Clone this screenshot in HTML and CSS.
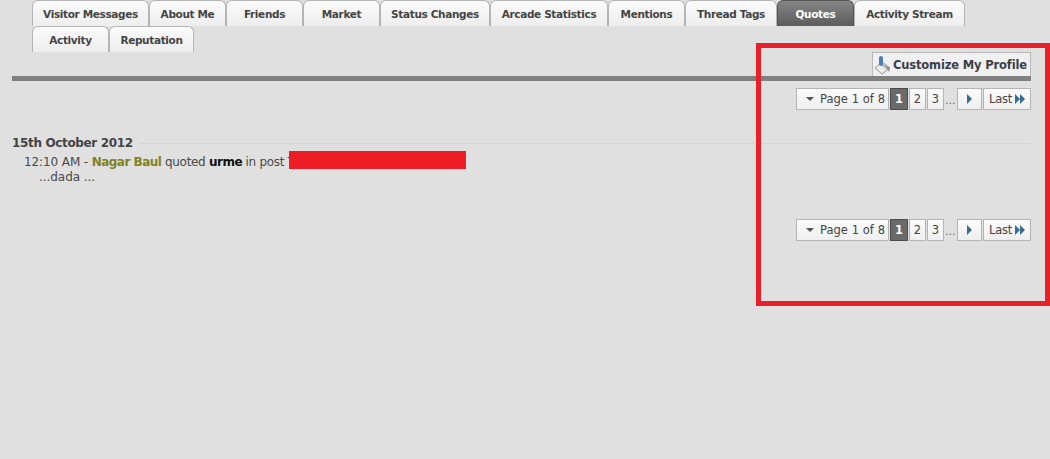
FILE: index.html
```html
<!DOCTYPE html>
<html lang="en">
<head>
    <meta charset="UTF-8">
    <title>Quotes</title>
    <link rel="stylesheet" href="styles.css">
</head>
<body>
    <ul class="tabs">
        <li class="tab tab-visitor">Visitor Messages</li>
        <li class="tab">About Me</li>
        <li class="tab">Friends</li>
        <li class="tab">Market</li>
        <li class="tab tab-status">Status Changes</li>
        <li class="tab tab-arcade">Arcade Statistics</li>
        <li class="tab">Mentions</li>
        <li class="tab tab-tags">Thread Tags</li>
        <li class="tab selected">Quotes</li>
        <li class="tab tab-stream">Activity Stream</li>
        <li class="tab">Activity</li>
        <li class="tab tab-rep">Reputation</li>
    </ul>

    <div class="profile-bar">
        <a class="customize">
            <svg class="brush" width="20" height="22" viewBox="0 0 20 22">
                <path d="M2 14 L9 8 L17 14 L9 20 Z" fill="#ececec" stroke="#9a9a9a"/>
                <path d="M10 9 L17 14 L14 16 L8 11 Z" fill="#bdbdbd"/>
                <rect x="6" y="2" width="4" height="10" rx="2" fill="#4d7fb5"/>
                <path d="M12 11 L17 14 L16 18 Z" fill="#8f8f8f"/>
            </svg>
            Customize My Profile
        </a>
    </div>

    <div class="pagination">
        <span class="page-box page-label"><i class="arrow-down"></i>Page 1 of 8</span>
        <span class="page-box page-num current">1</span>
        <span class="page-box page-num">2</span>
        <span class="page-box page-num">3</span>
        <span class="dots">...</span>
        <span class="page-box page-next"><i class="arrow-right"></i></span>
        <span class="page-box page-last">Last<i class="arrow-right small"></i><i class="arrow-right small"></i></span>
    </div>

    <div class="activity">
        <h3 class="date"><span>15th October 2012</span></h3>
        <div class="entry">
            <span class="time">12:10 AM -</span> <a class="user">Nagar Baul</a> quoted <b class="quoted">urme</b> in post T<span class="redacted"></span>
        </div>
        <div class="excerpt">...dada ...</div>
    </div>

    <div class="pagination bottom">
        <span class="page-box page-label"><i class="arrow-down"></i>Page 1 of 8</span>
        <span class="page-box page-num current">1</span>
        <span class="page-box page-num">2</span>
        <span class="page-box page-num">3</span>
        <span class="dots">...</span>
        <span class="page-box page-next"><i class="arrow-right"></i></span>
        <span class="page-box page-last">Last<i class="arrow-right small"></i><i class="arrow-right small"></i></span>
    </div>

    <div class="highlight"></div>
</body>
</html>
```

FILE: styles.css
```css
body {
    margin: 0;
    height: 459px;
    overflow: hidden;
    background: #e0e0e0;
    color: #3e3e3e;
    font-family: "DejaVu Sans", sans-serif;
    font-size: 12px;
    position: relative;
}

.tabs {
    display: flex;
    flex-wrap: wrap;
    width: 1000px;
    height: 52px;
    margin: 0 0 0 32px;
    padding: 0;
    list-style: none;
}

.tab {
    box-sizing: border-box;
    width: 77px;
    height: 26px;
    line-height: 27px;
    text-align: center;
    font-size: 10.5px;
    font-weight: bold;
    letter-spacing: -0.35px;
    color: #444;
    background: linear-gradient(#fbfbfb, #eeeeee);
    border: 1px solid #b5b5b5;
    border-bottom: none;
    border-radius: 6px 6px 0 0;
    white-space: nowrap;
}

.tab-visitor { width: 117px; }
.tab-status { width: 110px; }
.tab-arcade { width: 118px; }
.tab-tags { width: 92px; }
.tab-stream { width: 111px; }
.tab-rep { width: 85px; }

.tab.selected {
    color: #fff;
    background: linear-gradient(#858585, #5c5c5c);
    border-color: #555;
}

.profile-bar {
    display: flex;
    justify-content: flex-end;
    width: 1019px;
    height: 24px;
    margin-left: 12px;
    border-bottom: 5px solid #808080;
}

.customize {
    box-sizing: border-box;
    display: flex;
    align-items: center;
    width: 159px;
    height: 24px;
    font-size: 11.5px;
    font-weight: bold;
    letter-spacing: -0.15px;
    color: #3a3f45;
    background: #f0f0f0;
    border: 1px solid #b8b8b8;
    border-bottom: none;
    white-space: nowrap;
}

.brush {
    flex: none;
}

.pagination {
    display: flex;
    justify-content: flex-end;
    gap: 1px;
    width: 1031px;
    height: 22px;
    margin-top: 7px;
}

.pagination.bottom {
    margin-top: 34px;
}

.page-box {
    box-sizing: border-box;
    display: flex;
    align-items: center;
    justify-content: center;
    height: 22px;
    font-size: 11.5px;
    color: #444;
    background: linear-gradient(#fbfbfb, #efefef);
    border: 1px solid #b4b4b4;
    white-space: nowrap;
}

.page-label {
    width: 93px;
    justify-content: flex-end;
    padding-right: 3px;
    letter-spacing: 0.05px;
}

.page-num { width: 17px; }
.page-next { width: 25px; }
.page-last { width: 48px; letter-spacing: -0.2px; }

.page-num.current {
    width: 18px;
    color: #fff;
    font-weight: bold;
    background: #6a6a6a;
    border-color: #4d4d4d;
}

.dots {
    width: 11px;
    line-height: 25px;
    font-size: 11px;
    color: #666;
}

.arrow-down {
    width: 0;
    height: 0;
    margin-right: 6px;
    border-left: 4px solid transparent;
    border-right: 4px solid transparent;
    border-top: 4px solid #555;
}

.arrow-right {
    width: 0;
    height: 0;
    border-top: 5px solid transparent;
    border-bottom: 5px solid transparent;
    border-left: 5px solid #336d94;
}

.page-last .arrow-right:first-of-type {
    margin-left: 3px;
}

.activity {
    width: 1019px;
    margin: 25px 0 0 12px;
}

.date {
    display: flex;
    align-items: center;
    height: 16px;
    margin: 0;
    font-size: 12px;
    font-weight: bold;
    color: #444;
    letter-spacing: -0.35px;
}

.date::after {
    content: "";
    flex: 1;
    height: 1px;
    margin-left: 6px;
    background: #d5d5d5;
}

.entry {
    height: 18px;
    line-height: 18px;
    margin: 2px 0 0 12px;
    font-size: 12px;
    letter-spacing: -0.3px;
    color: #4a4a4a;
    white-space: nowrap;
}

.time {
    letter-spacing: -0.1px;
}

.user {
    color: #80801e;
    font-weight: bold;
    letter-spacing: -0.5px;
}

.quoted {
    color: #111;
    letter-spacing: -0.5px;
}

/* red scribble over the post title */
.redacted {
    display: inline-block;
    vertical-align: top;
    width: 177px;
    height: 18px;
    margin: -2px 0 0 -6px;
    background: #ee1c25;
}

.excerpt {
    margin: -1px 0 0 27px;
    height: 15px;
    line-height: 14px;
    font-size: 12px;
    letter-spacing: -0.05px;
    color: #4a4a4a;
}

/* red annotation drawn on top of the page */
.highlight {
    position: absolute;
    left: 756px;
    top: 43px;
    width: 294px;
    height: 263px;
    box-sizing: border-box;
    border: 5px solid #e8202a;
}
```
